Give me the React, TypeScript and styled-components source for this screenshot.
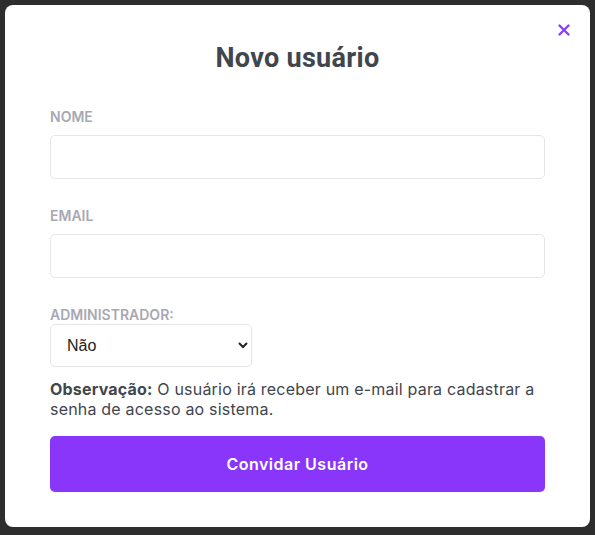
import React from "react";
import styled, { createGlobalStyle } from "styled-components";

const Global = createGlobalStyle`
  html, body { margin: 0; padding: 0; background: #2d2d2d; }
  body { width: 595px; height: 535px; overflow: hidden; }
  * { box-sizing: border-box; }
`;

const Overlay = styled.div`
  width: 595px;
  height: 535px;
  padding: 5px 5px 8px 5px;
  background: #2d2d2d;
`;

const Modal = styled.div`
  position: relative;
  width: 585px;
  height: 522px;
  background: #ffffff;
  border-radius: 8px;
  padding: 37px 45px 0 45px;
  display: flex;
  flex-direction: column;
  font-family: Inter, "Noto Sans", sans-serif;
`;

const CloseButton = styled.button`
  position: absolute;
  top: 13px;
  right: 14px;
  width: 24px;
  height: 24px;
  padding: 0;
  border: 0;
  background: transparent;
  display: flex;
  align-items: center;
  justify-content: center;
  cursor: pointer;
`;

const Title = styled.h2`
  margin: 0;
  font-family: Roboto, "Liberation Sans", sans-serif;
  font-weight: 700;
  font-size: 27px;
  line-height: 32px;
  letter-spacing: 0.3px;
  color: #41454d;
  text-align: center;
`;

const Form = styled.form`
  display: flex;
  flex-direction: column;
  margin-top: 35px;
`;

const Field = styled.div<{ $gap?: number }>`
  display: flex;
  flex-direction: column;
  margin-bottom: ${(p) => (p.$gap ?? 29)}px;
`;

const Label = styled.label<{ $spacing?: number }>`
  font-family: Inter, "Noto Sans", sans-serif;
  font-weight: 600;
  font-size: 14px;
  line-height: 16px;
  color: #a8a8b3;
  text-transform: uppercase;
  margin-bottom: ${(p) => (p.$spacing ?? 10)}px;
`;

const Input = styled.input`
  width: 100%;
  height: 44px;
  border: 1px solid #e6e6ea;
  border-radius: 5px;
  background: #ffffff;
  padding: 0 14px;
  font-family: Inter, sans-serif;
  font-size: 15px;
  outline: none;
`;

const Select = styled.select`
  width: 202px;
  height: 43px;
  border: 1px solid #e6e6ea;
  border-radius: 5px;
  background: #ffffff;
  padding: 0 12px;
  font-family: "Liberation Sans", Arial, sans-serif;
  font-size: 16px;
  color: #222;
`;

const Note = styled.p`
  margin: 0;
  font-family: Inter, "Noto Sans", sans-serif;
  font-size: 16px;
  line-height: 20px;
  letter-spacing: 0.2px;
  color: #41454d;
  strong { font-weight: 700; }
`;

const Submit = styled.button`
  margin-top: 17px;
  width: 100%;
  height: 56px;
  border: 0;
  border-radius: 5px;
  background: #8a36fa;
  color: #ffffff;
  font-family: Inter, "Noto Sans", sans-serif;
  font-weight: 600;
  font-size: 16px;
  letter-spacing: 0.5px;
  cursor: pointer;
`;

export default function App() {
  return (
    <>
      <Global />
      <Overlay>
        <Modal>
          <CloseButton aria-label="Fechar">
            <svg width="12" height="12" viewBox="0 0 12 12">
              <path d="M1.5 1.5 L10.5 10.5 M10.5 1.5 L1.5 10.5" stroke="#8a3ffc" strokeWidth="2.4" strokeLinecap="round" />
            </svg>
          </CloseButton>
          <Title>Novo usuário</Title>
          <Form onSubmit={(e) => e.preventDefault()}>
            <Field>
              <Label>Nome</Label>
              <Input type="text" />
            </Field>
            <Field>
              <Label>Email</Label>
              <Input type="email" />
            </Field>
            <Field $gap={12}>
              <Label $spacing={1}>Administrador:</Label>
              <Select defaultValue="nao">
                <option value="nao">Não</option>
                <option value="sim">Sim</option>
              </Select>
            </Field>
            <Note>
              <strong>Observação:</strong> O usuário irá receber um e-mail para cadastrar a senha de acesso ao sistema.
            </Note>
            <Submit type="submit">Convidar Usuário</Submit>
          </Form>
        </Modal>
      </Overlay>
    </>
  );
}
